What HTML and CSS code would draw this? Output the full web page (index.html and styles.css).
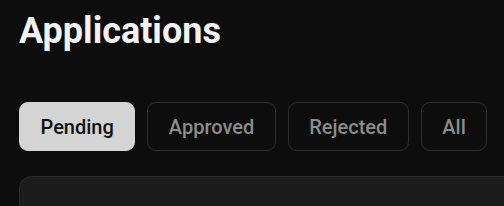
FILE: index.html
```html
<!DOCTYPE html>
<html lang="en">

<head>
    <meta charset="UTF-8">
    <meta name="viewport" content="width=device-width, initial-scale=1.0">
    <title>Applications</title>
    <link rel="stylesheet" href="styles.css">
</head>

<body>
    <h1>Applications</h1>
    <div class="tabs">
        <button class="tab active">Pending</button>
        <button class="tab">Approved</button>
        <button class="tab">Rejected</button>
        <button class="tab">All</button>
    </div>
    <div class="card"></div>
</body>

</html>
```

FILE: styles.css
```css
body {
    font-family: Roboto, "Liberation Sans", sans-serif;
    background-color: #0d0d0d;
    color: #f2f2f2;
    margin: 0;
    padding: 10px 19px 0;
    overflow: hidden;
    height: 206px;
    box-sizing: border-box;
}

h1 {
    font-size: 36px;
    font-weight: 700;
    line-height: 42px;
    margin: 0;
}

.tabs {
    display: flex;
    gap: 12px;
    margin-top: 50px;
}

.tab {
    font-family: inherit;
    font-size: 20px;
    font-weight: 500;
    height: 49px;
    padding: 0 20.5px;
    border: 1px solid #2e2e2e;
    border-radius: 9px;
    background-color: #0d0d0d;
    color: #8c8c8c;
}

.tab.active {
    background-color: #d4d4d4;
    border-color: #d4d4d4;
    color: #111;
}

.card {
    margin-top: 25px;
    width: 520px;
    height: 80px;
    background-color: #1c1c1c;
    border: 1px solid #2b2b2b;
    border-radius: 12px;
}
```
